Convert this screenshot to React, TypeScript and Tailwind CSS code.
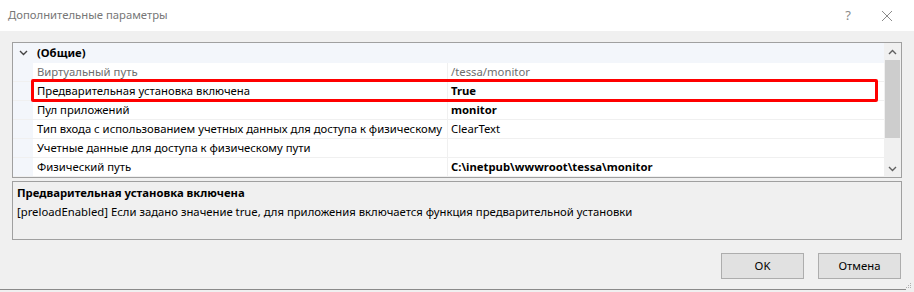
import React from "react";

const font = { fontFamily: '"Noto Sans", "Segoe UI", sans-serif' };

function Row({
  label,
  value,
  bold,
  dim,
}: {
  label: string;
  value: string;
  bold?: boolean;
  dim?: boolean;
}) {
  return (
    <div className="flex h-[19px] border-b border-[#f0f0f0]">
      <div className="w-[20px] shrink-0 bg-[#f3f6fb]" />
      <div
        className={`w-[415px] shrink-0 border-r border-[#f0f0f0] pl-[4px] leading-[18px] whitespace-nowrap overflow-hidden ${
          dim ? "text-[#6d6d6d]" : "text-black"
        }`}
      >
        {label}
      </div>
      <div
        className={`flex-1 pl-[3px] leading-[18px] whitespace-nowrap overflow-hidden ${
          dim ? "text-[#6d6d6d]" : "text-black"
        } ${bold ? "font-bold" : ""}`}
      >
        {value}
      </div>
    </div>
  );
}

export default function App() {
  return (
    <div
      className="w-[914px] h-[292px] bg-[#f0f0f0] flex flex-col text-[11.3px] overflow-hidden relative"
      style={font}
    >
      {/* Title bar */}
      <div className="h-[31px] bg-white flex items-center shrink-0">
        <div className="pl-[8px] text-[#777777] text-[11.3px] flex-1">Дополнительные параметры</div>
        <div className="text-[#8a8a8a] text-[13px] w-[20px] text-center mr-[23px]">?</div>
        <svg width="12" height="12" viewBox="0 0 12 12" className="mr-[21px]">
          <path d="M1 1 L11 11 M11 1 L1 11" stroke="#8a8a8a" strokeWidth="1" fill="none" />
        </svg>
      </div>

      {/* Property grid */}
      <div className="mx-[12px] mt-[11px] h-[136px] border border-[#a0a0a0] bg-white flex relative shrink-0">
        <div className="flex-1 flex flex-col">
          <div className="flex h-[20px] bg-[#f3f6fb] items-center">
            <div className="w-[20px] flex justify-center">
              <svg width="9" height="6" viewBox="0 0 9 6">
                <path d="M1 1 L4.5 4.5 L8 1" stroke="#444" strokeWidth="1.4" fill="none" />
              </svg>
            </div>
            <div className="pl-[4px] font-bold text-black">(Общие)</div>
          </div>
          <Row label="Виртуальный путь" value="/tessa/monitor" dim />
          <Row label="Предварительная установка включена" value="True" bold />
          <Row label="Пул приложений" value="monitor" bold />
          <Row
            label="Тип входа с использованием учетных данных для доступа к физическому"
            value="ClearText"
          />
          <Row label="Учетные данные для доступа к физическому пути" value="" />
          <Row label="Физический путь" value="C:\inetpub\wwwroot\tessa\monitor" bold />
        </div>
        {/* Scrollbar */}
        <div className="w-[17px] bg-[#f0f0f0] flex flex-col items-center shrink-0">
          <div className="h-[17px] flex items-center justify-center">
            <svg width="9" height="6" viewBox="0 0 9 6">
              <path d="M1 5 L4.5 1.5 L8 5" stroke="#606060" strokeWidth="1.4" fill="none" />
            </svg>
          </div>
          <div className="w-[15px] h-[78px] bg-[#cdcdcd]" />
          <div className="flex-1" />
          <div className="h-[17px] flex items-center justify-center">
            <svg width="9" height="6" viewBox="0 0 9 6">
              <path d="M1 1 L4.5 4.5 L8 1" stroke="#606060" strokeWidth="1.4" fill="none" />
            </svg>
          </div>
        </div>
        {/* Red highlight */}
        <div className="absolute left-[18px] top-[36px] w-[847px] h-[23px] border-[3px] border-[#ff0000] rounded-[2px] pointer-events-none" />
      </div>

      {/* Description */}
      <div className="mx-[12px] mt-[3px] h-[59px] border border-[#a0a0a0] bg-[#f0f0f0] pl-[4px] pt-[2px] shrink-0">
        <div className="font-bold text-black leading-[18px]">Предварительная установка включена</div>
        <div className="text-black leading-[18px] mt-[1px]">
          [preloadEnabled] Если задано значение true, для приложения включается функция предварительной установки
        </div>
      </div>

      {/* Buttons */}
      <div className="flex justify-end gap-[14px] mr-[13px] mt-[13px] shrink-0">
        <button className="w-[83px] h-[26px] bg-[#e1e1e1] border border-[#adadad] text-black text-[11.3px]">OK</button>
        <button className="w-[83px] h-[26px] bg-[#e1e1e1] border border-[#adadad] text-black text-[11.3px]">Отмена</button>
      </div>

      {/* Resize grip */}
      <div className="absolute right-[3px] bottom-[4px] grid grid-cols-3 gap-[1px]">
        <span className="w-[1px] h-[1px]" />
        <span className="w-[1px] h-[1px]" />
        <span className="w-[1px] h-[1px] bg-[#b0b0b0]" />
        <span className="w-[1px] h-[1px]" />
        <span className="w-[1px] h-[1px] bg-[#b0b0b0]" />
        <span className="w-[1px] h-[1px] bg-[#b0b0b0]" />
        <span className="w-[1px] h-[1px] bg-[#b0b0b0]" />
        <span className="w-[1px] h-[1px] bg-[#b0b0b0]" />
        <span className="w-[1px] h-[1px] bg-[#b0b0b0]" />
      </div>
      <div className="absolute left-0 bottom-[2px] w-[906px] h-px bg-[#8a8a8a]" />
    </div>
  );
}
